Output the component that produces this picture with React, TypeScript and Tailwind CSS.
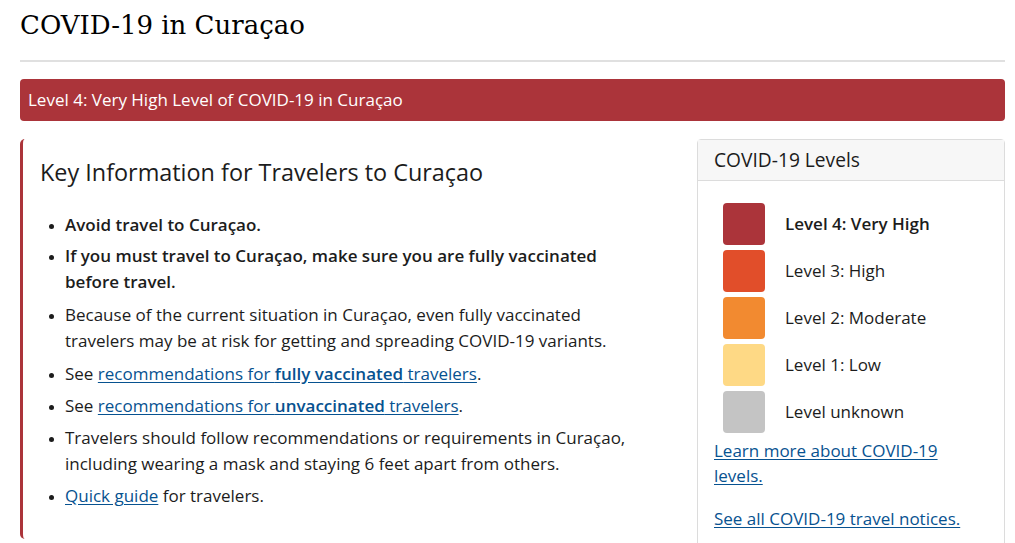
import React from 'react';

type Level = { color: string; label: string; bold?: boolean };

const levels: Level[] = [
  { color: 'bg-[#ab343a]', label: 'Level 4: Very High', bold: true },
  { color: 'bg-[#e14e2a]', label: 'Level 3: High' },
  { color: 'bg-[#f28a30]', label: 'Level 2: Moderate' },
  { color: 'bg-[#fed985]', label: 'Level 1: Low' },
  { color: 'bg-[#c4c4c4]', label: 'Level unknown' },
];

const linkCls = 'text-[#075290] underline underline-offset-2';

export default function App() {
  return (
    <div
      className="min-h-screen bg-white pl-5 pr-[10px] text-[17px] text-[#1c1c1c]"
      style={{ fontFamily: '"Open Sans", sans-serif' }}
    >
      <h1
        className="pt-[5px] pb-[15px] text-[26px] leading-[40px] text-black border-b-2 border-[#e0e0e0]"
        style={{ fontFamily: '"DejaVu Serif", serif' }}
      >
        COVID-19 in Curaçao
      </h1>

      <div className="mt-[17px] rounded-[4px] bg-[#ab343a] px-2 py-[8px] leading-[26px] text-white">
        Level 4: Very High Level of COVID-19 in Curaçao
      </div>

      <div className="mt-[18px] flex items-start gap-5">
        <div className="flex-1 rounded-l-[5px] border-l-[3px] border-[#ab343a] pl-[17px] pr-6 pt-[16px] pb-[30px]">
          <h2 className="text-[23.4px] leading-[34px] text-[#1c1c1c]">Key Information for Travelers to Curaçao</h2>
          <ul className="mt-[23px] list-disc pl-[25px] leading-[26px] marker:text-[13px]">
            <li className="mb-[5px] font-semibold">Avoid travel to Curaçao.</li>
            <li className="mb-[7px] font-semibold">
              If you must travel to Curaçao, make sure you are fully vaccinated before travel.
            </li>
            <li className="mb-[7px]">
              Because of the current situation in Curaçao, even fully vaccinated travelers may be at risk for getting
              and spreading COVID-19 variants.
            </li>
            <li className="mb-[6px]">
              See{' '}
              <a href="#" className={linkCls}>
                recommendations for <b className="font-semibold">fully vaccinated</b> travelers
              </a>
              .
            </li>
            <li className="mb-[6px]">
              See{' '}
              <a href="#" className={linkCls}>
                recommendations for <b className="font-semibold">unvaccinated</b> travelers
              </a>
              .
            </li>
            <li className="mb-[6px]">
              Travelers should follow recommendations or requirements in Curaçao, including wearing a mask and staying
              6 feet apart from others.
            </li>
            <li>
              <a href="#" className={linkCls}>
                Quick guide
              </a>{' '}
              for travelers.
            </li>
          </ul>
        </div>

        <div className="w-[308px] rounded-[4px] border border-[#dcdcdc] pb-[20px]">
          <div className="border-b border-[#dcdcdc] bg-[#f7f7f7] px-[16px] py-[7px] text-[19.2px] leading-[26px]">
            COVID-19 Levels
          </div>
          <div className="px-[16px] pt-[22px]">
            <div className="flex flex-col gap-[5px] pl-[9px]">
              {levels.map((l) => (
                <div key={l.label} className="flex items-center gap-5">
                  <span className={`h-[42px] w-[42px] rounded-[4px] ${l.color}`} />
                  <span className={l.bold ? 'font-semibold' : ''}>{l.label}</span>
                </div>
              ))}
            </div>
            <p className="mt-[5px] leading-[25px]">
              <a href="#" className={linkCls}>
                Learn more about COVID-19 levels.
              </a>
            </p>
            <p className="mt-[18px] leading-[25px]">
              <a href="#" className={linkCls}>
                See all COVID-19 travel notices.
              </a>
            </p>
          </div>
        </div>
      </div>
    </div>
  );
}
